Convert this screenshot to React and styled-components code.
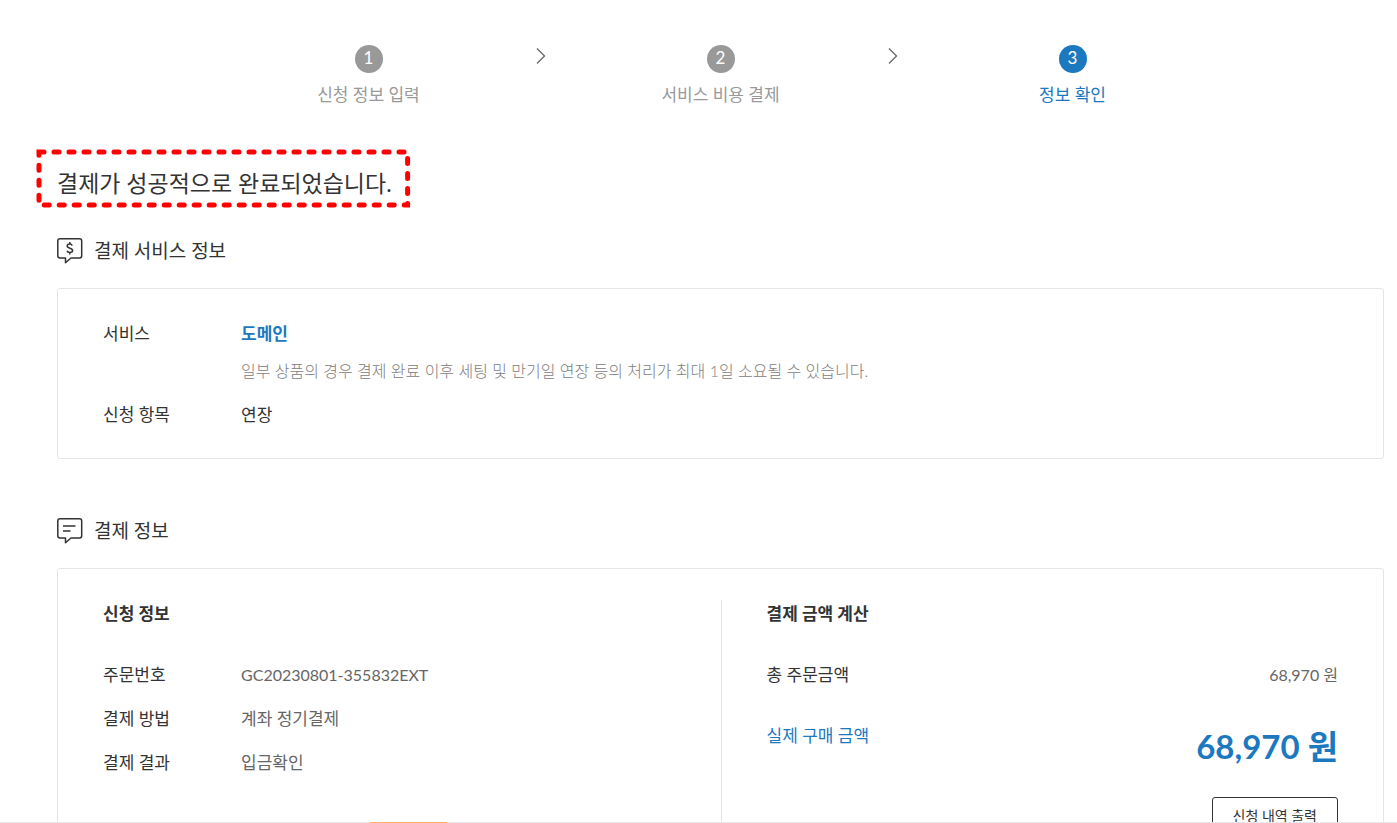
import React from "react";
import styled, { createGlobalStyle } from "styled-components";

const COLORS = {
    text: "#333",
    muted: "#666",
    gray: "#999",
    line: "#e5e5e5",
    primary: "#1c79c0",
    alert: "#f00",
};

const STEPS = [
    { number: 1, label: "신청 정보 입력" },
    { number: 2, label: "서비스 비용 결제" },
    { number: 3, label: "정보 확인", current: true },
];

const ORDER_ROWS = [
    { label: "주문번호", value: "GC20230801-355832EXT", numeric: true },
    { label: "결제 방법", value: "계좌 정기결제" },
    { label: "결제 결과", value: "입금확인" },
];

const Bubble = ({ children }) => (
    <BubbleSvg viewBox="0 0 26 26" aria-hidden="true">
        <path d="M3 .8h19.500a2.200 2.200 0 0 1 2.200 2.200v14.800a2.200 2.200 0 0 1-2.200 2.200h-8.500l-5.500 4.700v-4.700H3A2.200 2.200 0 0 1 .8 17.800V3A2.200 2.200 0 0 1 3 .8Z" />
        {children}
    </BubbleSvg>
);

const App = () => {
    return (
        <Page>
            <GlobalStyle />
            <Steps>
                {STEPS.map(({ number, label, current }, index) => (
                    <React.Fragment key={number}>
                        {index > 0 && (
                            <Arrow aria-hidden="true">
                                <svg width="10" height="16" viewBox="0 0 10 16">
                                    <path d="M1 .5l7.5 7.5L1 15.5" />
                                </svg>
                            </Arrow>
                        )}
                        <Step
                            $current={current}
                            aria-current={current ? "step" : undefined}
                        >
                            <StepNumber $current={current}>{number}</StepNumber>
                            {label}
                        </Step>
                    </React.Fragment>
                ))}
            </Steps>

            <Title>
                결제가 성공적으로 완료되었습니다.
                <Marker aria-hidden="true">
                    <rect width="100%" height="100%" />
                </Marker>
            </Title>

            <Section>
                <SectionTitle>
                    <Bubble>
                        <path d="M15.200 7.600c-.3-1-1.200-1.500-2.400-1.500-1.500 0-2.600.8-2.600 2 0 2.800 5.400 1.400 5.400 4.300 0 1.200-1.200 2-2.800 2-1.400 0-2.500-.6-2.800-1.700M12.800 4v2.100M12.800 14.400v2.100" />
                    </Bubble>
                    결제 서비스 정보
                </SectionTitle>
                <ServiceCard>
                    <Rows>
                        <Row>
                            <dt>서비스</dt>
                            <dd>
                                <Service>도메인</Service>
                                <Notice>
                                    일부 상품의 경우 결제 완료 이후 세팅 및
                                    만기일 연장 등의 처리가 최대 1일 소요될 수
                                    있습니다.
                                </Notice>
                            </dd>
                        </Row>
                        <Row>
                            <dt>신청 항목</dt>
                            <dd>연장</dd>
                        </Row>
                    </Rows>
                </ServiceCard>
            </Section>

            <Section>
                <SectionTitle>
                    <Bubble>
                        <path d="M6 8h12.500M6 13h7.500" />
                    </Bubble>
                    결제 정보
                </SectionTitle>
                <Card>
                    <Columns>
                        <Column>
                            <ColumnTitle>신청 정보</ColumnTitle>
                            <Rows $muted>
                                {ORDER_ROWS.map(({ label, value, numeric }) => (
                                    <Row key={label}>
                                        <dt>{label}</dt>
                                        <dd>
                                            {numeric ? (
                                                <Numeric>{value}</Numeric>
                                            ) : (
                                                value
                                            )}
                                        </dd>
                                    </Row>
                                ))}
                            </Rows>
                        </Column>
                        <Column $divided>
                            <ColumnTitle>결제 금액 계산</ColumnTitle>
                            <Amount>
                                <span>총 주문금액</span>
                                <Numeric>68,970 원</Numeric>
                            </Amount>
                            <Amount $total>
                                <span>실제 구매 금액</span>
                                <TotalPrice>68,970 원</TotalPrice>
                            </Amount>
                            <PrintButton type="button">
                                신청 내역 출력
                            </PrintButton>
                        </Column>
                    </Columns>
                </Card>
            </Section>

            <BottomEdge>
                <ActiveTab />
            </BottomEdge>
        </Page>
    );
};

const GlobalStyle = createGlobalStyle`
    * {
        box-sizing: border-box;
    }

    body {
        margin: 0;
        background: #fff;
        color: ${COLORS.text};
        font-family: Lato, "Noto Sans CJK KR", sans-serif;
        font-size: 17px;
        line-height: 24px;
    }

    h1, h2, h3, p, ol, dl, dd {
        margin: 0;
        padding: 0;
        font-weight: 400;
    }
`;

const Page = styled.main`
    height: 100vh;
    overflow: hidden;
    padding: 45px 13px 0 57px;
`;

const Steps = styled.ol`
    display: flex;
    max-width: 1038px;
    margin: 0 auto;
    list-style: none;
`;

const Step = styled.li`
    flex: 1;
    display: flex;
    flex-direction: column;
    align-items: center;
    gap: 10px;
    color: ${({ $current }) => ($current ? COLORS.primary : COLORS.gray)};
`;

const StepNumber = styled.span`
    width: 28px;
    height: 28px;
    border-radius: 50%;
    background: ${({ $current }) => ($current ? COLORS.primary : COLORS.gray)};
    color: #fff;
    line-height: 26px;
    text-align: center;
`;

const Arrow = styled.li`
    width: 18px;
    padding-top: 3px;

    svg {
        display: block;
        fill: none;
        stroke: ${COLORS.muted};
        stroke-width: 1.3;
    }
`;

const Title = styled.h1`
    position: relative;
    width: fit-content;
    margin-top: 58px;
    font-size: 23px;
    line-height: 36px;
`;

const Marker = styled.svg`
    position: absolute;
    top: -13px;
    left: -18px;
    width: calc(100% + 34px);
    height: 53px;
    overflow: visible;
    fill: none;
    stroke: ${COLORS.alert};
    stroke-width: 5;
    stroke-linecap: round;
    stroke-dasharray: 5 10;
`;

const Section = styled.section`
    margin-top: 35px;

    & + & {
        margin-top: 57px;
    }
`;

const SectionTitle = styled.h2`
    display: flex;
    align-items: center;
    gap: 11px;
    margin-bottom: 22px;
    font-size: 19px;
    line-height: 30px;
`;

const BubbleSvg = styled.svg`
    width: 26px;
    height: 26px;
    fill: none;
    stroke: ${COLORS.text};
    stroke-width: 1.5;
    stroke-linejoin: round;
`;

const Card = styled.div`
    border: 1px solid ${COLORS.line};
    border-radius: 3px;
    padding: 31px 0;
`;

const ServiceCard = styled(Card)`
    padding-top: 33px;
`;

const Rows = styled.dl`
    display: grid;
    gap: 20px;
    padding: 0 45px;
    color: ${({ $muted }) => ($muted ? COLORS.muted : COLORS.text)};
`;

const Row = styled.div`
    display: grid;
    grid-template-columns: 138px 1fr;

    dt {
        color: ${COLORS.text};
    }
`;

const Service = styled.strong`
    color: ${COLORS.primary};
    font-weight: 700;
`;

const Notice = styled.p`
    margin-top: 13px;
    color: #808080;
    font-size: 16px;
    font-weight: 300;
`;

const Columns = styled.div`
    display: grid;
    grid-template-columns: 1fr 1fr;
`;

const Column = styled.div`
    min-height: 260px;
    padding-top: 2px;
    border-left: ${({ $divided }) =>
        $divided ? `1px solid ${COLORS.line}` : "0"};
`;

const ColumnTitle = styled.h3`
    padding: 0 45px;
    margin-bottom: 37px;
    font-size: 17px;
    font-weight: 700;
`;

const Amount = styled.div`
    display: flex;
    justify-content: space-between;
    padding: 0 45px;
    margin-bottom: ${({ $total }) => ($total ? "29px" : "37px")};
    color: ${({ $total }) => ($total ? COLORS.primary : COLORS.text)};
`;

const Numeric = styled.span`
    color: ${COLORS.muted};
    font-size: 16px;
`;

const TotalPrice = styled.strong`
    font-size: 33px;
    font-weight: 700;
    line-height: 44px;
`;

const PrintButton = styled.button`
    display: block;
    margin: 0 45px 0 auto;
    padding: 6px 20px;
    border: 1px solid ${COLORS.text};
    border-radius: 3px;
    background: #fff;
    color: ${COLORS.text};
    font: inherit;
    font-size: 14px;
`;

const BottomEdge = styled.div`
    position: fixed;
    right: 0;
    bottom: 0;
    left: 0;
    height: 1px;
    padding-left: 370px;
    background: #e6e8ea;
`;

const ActiveTab = styled.div`
    width: 77px;
    height: 1px;
    background: #f9ae73;
`;

export default App;
